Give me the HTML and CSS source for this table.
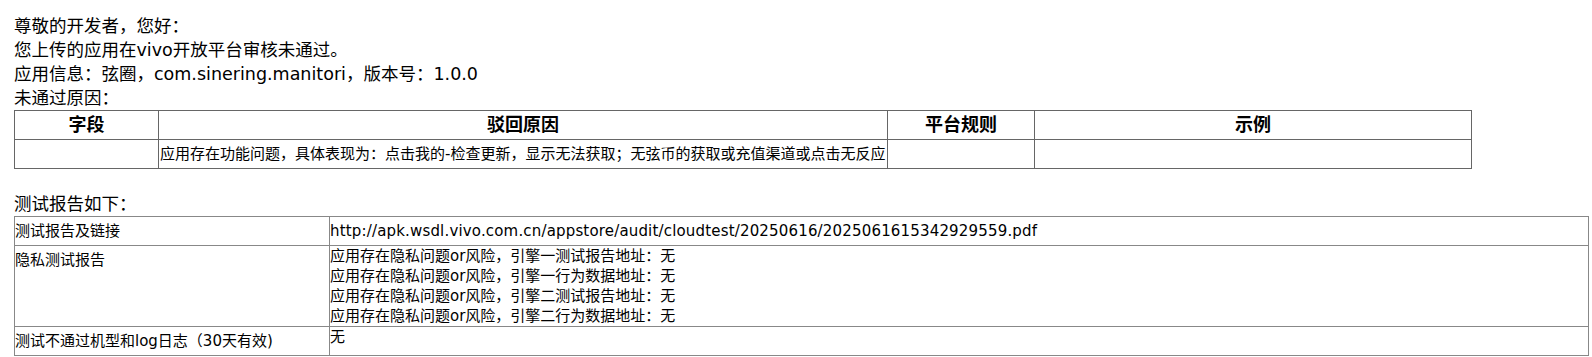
FILE: index.html
```html
<!DOCTYPE html>
<html lang="zh-CN">
<head>
<meta charset="utf-8">
<title>审核结果</title>
<link rel="stylesheet" href="styles.css">
</head>
<body>
<div class="page">
  <div class="intro">
    <div class="line">尊敬的开发者，您好：</div>
    <div class="line">您上传的应用在vivo开放平台审核未通过。</div>
    <div class="line">应用信息：弦圈，com.sinering.manitori，版本号：1.0.0</div>
    <div class="line">未通过原因：</div>
  </div>
  <table class="reasons">
    <colgroup>
      <col class="c1"><col class="c2"><col class="c3"><col class="c4">
    </colgroup>
    <thead>
      <tr><th>字段</th><th>驳回原因</th><th>平台规则</th><th>示例</th></tr>
    </thead>
    <tbody>
      <tr><td></td><td>应用存在功能问题，具体表现为：点击我的-检查更新，显示无法获取；无弦币的获取或充值渠道或点击无反应</td><td></td><td></td></tr>
    </tbody>
  </table>
  <div class="line report-title">测试报告如下：</div>
  <table class="report">
    <colgroup>
      <col class="r1"><col class="r2">
    </colgroup>
    <tbody>
      <tr><td class="label">测试报告及链接</td><td class="value single">http://apk.wsdl.vivo.com.cn/appstore/audit/cloudtest/20250616/2025061615342929559.pdf</td></tr>
      <tr><td class="label">隐私测试报告</td><td class="value">
        <div>应用存在隐私问题or风险，引擎一测试报告地址：无</div>
        <div>应用存在隐私问题or风险，引擎一行为数据地址：无</div>
        <div>应用存在隐私问题or风险，引擎二测试报告地址：无</div>
        <div>应用存在隐私问题or风险，引擎二行为数据地址：无</div>
      </td></tr>
      <tr><td class="label">测试不通过机型和log日志（30天有效)</td><td class="value"><div>无</div></td></tr>
    </tbody>
  </table>
</div>
</body>
</html>
```

FILE: styles.css
```css
html, body {
  margin: 0;
  padding: 0;
  background: #fff;
  color: #000;
}
body {
  font-family: "DejaVu Sans", "Noto Sans CJK SC", sans-serif;
}
.page {
  padding: 14px 0 0 14px;
}
.line {
  font-size: 17.5px;
  line-height: 24px;
}
.reasons {
  border-collapse: collapse;
  table-layout: fixed;
  width: 1457px;
}
.reasons .c1 { width: 144px; }
.reasons .c2 { width: 729px; }
.reasons .c3 { width: 147px; }
.reasons .c4 { width: 437px; }
.reasons th,
.reasons td {
  border: 1px solid #666;
  padding: 0 1px;
  vertical-align: middle;
}
.reasons th {
  font-size: 18px;
  font-weight: bold;
  line-height: 28px;
  text-align: center;
}
.reasons td {
  font-size: 15px;
  line-height: 28px;
  white-space: nowrap;
  overflow: hidden;
}
.report-title {
  margin-top: 23px;
}
.report {
  border-collapse: collapse;
  table-layout: fixed;
  width: 1574px;
}
.report .r1 { width: 315px; }
.report .r2 { width: 1259px; }
.report td {
  border: 1px solid #888;
  padding: 0;
  font-size: 15px;
  vertical-align: top;
}
.report .label {
  line-height: 28px;
}
.report .value {
  line-height: 20px;
}
.report .value.single {
  line-height: 28px;
  letter-spacing: 0.17px;
}
```
